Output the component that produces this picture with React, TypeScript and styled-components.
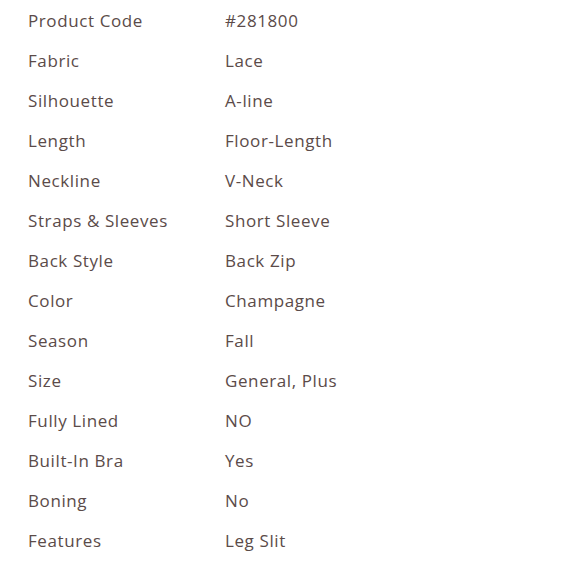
import React from "react";
import styled, { createGlobalStyle } from "styled-components";

const Global = createGlobalStyle`
  html, body { margin: 0; padding: 0; background: #ffffff; }
`;

const Table = styled.div`
  display: grid;
  grid-template-columns: 197px 1fr;
  padding: 1px 0 0 28px;
  font-family: "Open Sans", "Liberation Sans", sans-serif;
  font-size: 17px;
  color: #5b4b49;
  letter-spacing: 0.6px;
`;

const Cell = styled.div`
  height: 40px;
  line-height: 40px;
  white-space: nowrap;
`;

const rows: [string, string][] = [
  ["Product Code", "#281800"],
  ["Fabric", "Lace"],
  ["Silhouette", "A-line"],
  ["Length", "Floor-Length"],
  ["Neckline", "V-Neck"],
  ["Straps & Sleeves", "Short Sleeve"],
  ["Back Style", "Back Zip"],
  ["Color", "Champagne"],
  ["Season", "Fall"],
  ["Size", "General, Plus"],
  ["Fully Lined", "NO"],
  ["Built-In Bra", "Yes"],
  ["Boning", "No"],
  ["Features", "Leg Slit"],
];

export default function App() {
  return (
    <>
      <Global />
      <Table>
        {rows.map(([k, v]) => (
          <React.Fragment key={k}>
            <Cell>{k}</Cell>
            <Cell>{v}</Cell>
          </React.Fragment>
        ))}
      </Table>
    </>
  );
}
